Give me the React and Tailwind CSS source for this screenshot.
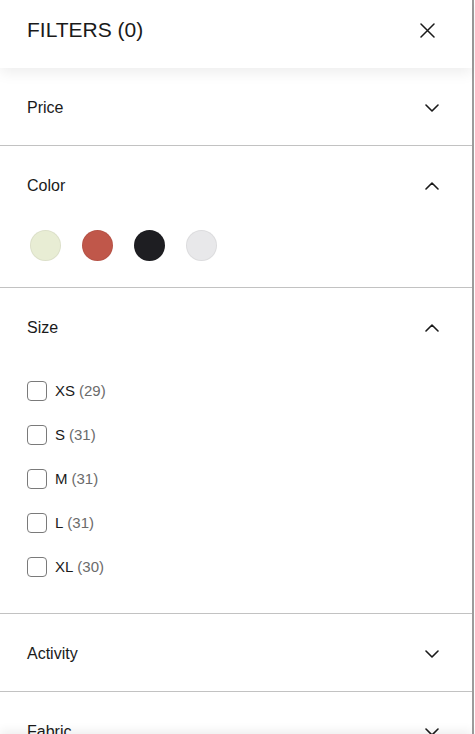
import { useState } from 'react'

const swatches = ['#e8edd4', '#c0574a', '#1e1e22', '#e8e8ea']

const sizes = [
  { label: 'XS', count: 29 },
  { label: 'S', count: 31 },
  { label: 'M', count: 31 },
  { label: 'L', count: 31 },
  { label: 'XL', count: 30 },
]

function Chevron({ up }) {
  return (
    <svg width="14" height="8" viewBox="0 0 14 8" fill="none" stroke="#1a1a1a" strokeWidth="1.6" strokeLinecap="round" strokeLinejoin="round">
      {up ? <path d="M1 7l6-6 6 6" /> : <path d="M1 1l6 6 6-6" />}
    </svg>
  )
}

function Section({ title, open, onToggle, children }) {
  return (
    <div className="border-b border-[#c2c2c2]">
      <button
        type="button"
        onClick={onToggle}
        className="flex h-[77px] w-full items-center justify-between pl-[27px] pr-[33px] pt-[2px] text-left"
      >
        <span className="text-[16px] leading-6 text-[#1a1a1a]">{title}</span>
        <Chevron up={open} />
      </button>
      {open && children}
    </div>
  )
}

export default function App() {
  const [open, setOpen] = useState({ Price: false, Color: true, Size: true, Activity: false, Fabric: false })
  const toggle = (k) => setOpen({ ...open, [k]: !open[k] })

  return (
    <div className="relative h-[734px] w-[475px] overflow-hidden bg-white" style={{ fontFamily: '"Liberation Sans", Arial, sans-serif' }}>
      <div className="h-full w-[474px] border-r-2 border-[#9c9c9c]">
        <div className="relative z-10 flex h-[68px] items-center justify-between pb-[8px] pl-[27px] pr-[37px] shadow-[0_4px_14px_rgba(0,0,0,0.08)]">
          <h2 className="text-[21px] font-normal text-[#1a1a1a]">FILTERS (0)</h2>
          <svg width="15" height="15" viewBox="0 0 15 15" fill="none" stroke="#1a1a1a" strokeWidth="1.5" strokeLinecap="round">
            <path d="M1 1l13 13M14 1L1 14" />
          </svg>
        </div>

        <Section title="Price" open={open.Price} onToggle={() => toggle('Price')} />

        <Section title="Color" open={open.Color} onToggle={() => toggle('Color')}>
          <div className="flex gap-[21px] pb-[26px] pl-[30px] pt-[7px]">
            {swatches.map((c) => (
              <span
                key={c}
                className="h-[31px] w-[31px] rounded-full border border-black/5"
                style={{ backgroundColor: c }}
              />
            ))}
          </div>
        </Section>

        <Section title="Size" open={open.Size} onToggle={() => toggle('Size')}>
          <ul className="flex flex-col gap-[24px] pb-[36px] pl-[27px] pt-[16px]">
            {sizes.map((s) => (
              <li key={s.label} className="flex h-[20px] items-center">
                <span className="h-[20px] w-[20px] rounded-[4px] border border-[#7a7a7a]" />
                <span className="ml-[8px] pt-[1px] text-[15px] text-[#1a1a1a]">{s.label}</span>
                <span className="ml-[4px] pt-[1px] text-[15px] text-[#6b6b6b]">({s.count})</span>
              </li>
            ))}
          </ul>
        </Section>

        <Section title="Activity" open={open.Activity} onToggle={() => toggle('Activity')} />
        <Section title="Fabric" open={open.Fabric} onToggle={() => toggle('Fabric')} />
      </div>

      <div className="absolute left-0 top-[734px] z-10 h-[60px] w-[472px] bg-white shadow-[0_-3px_10px_rgba(0,0,0,0.07)]" />
    </div>
  )
}
